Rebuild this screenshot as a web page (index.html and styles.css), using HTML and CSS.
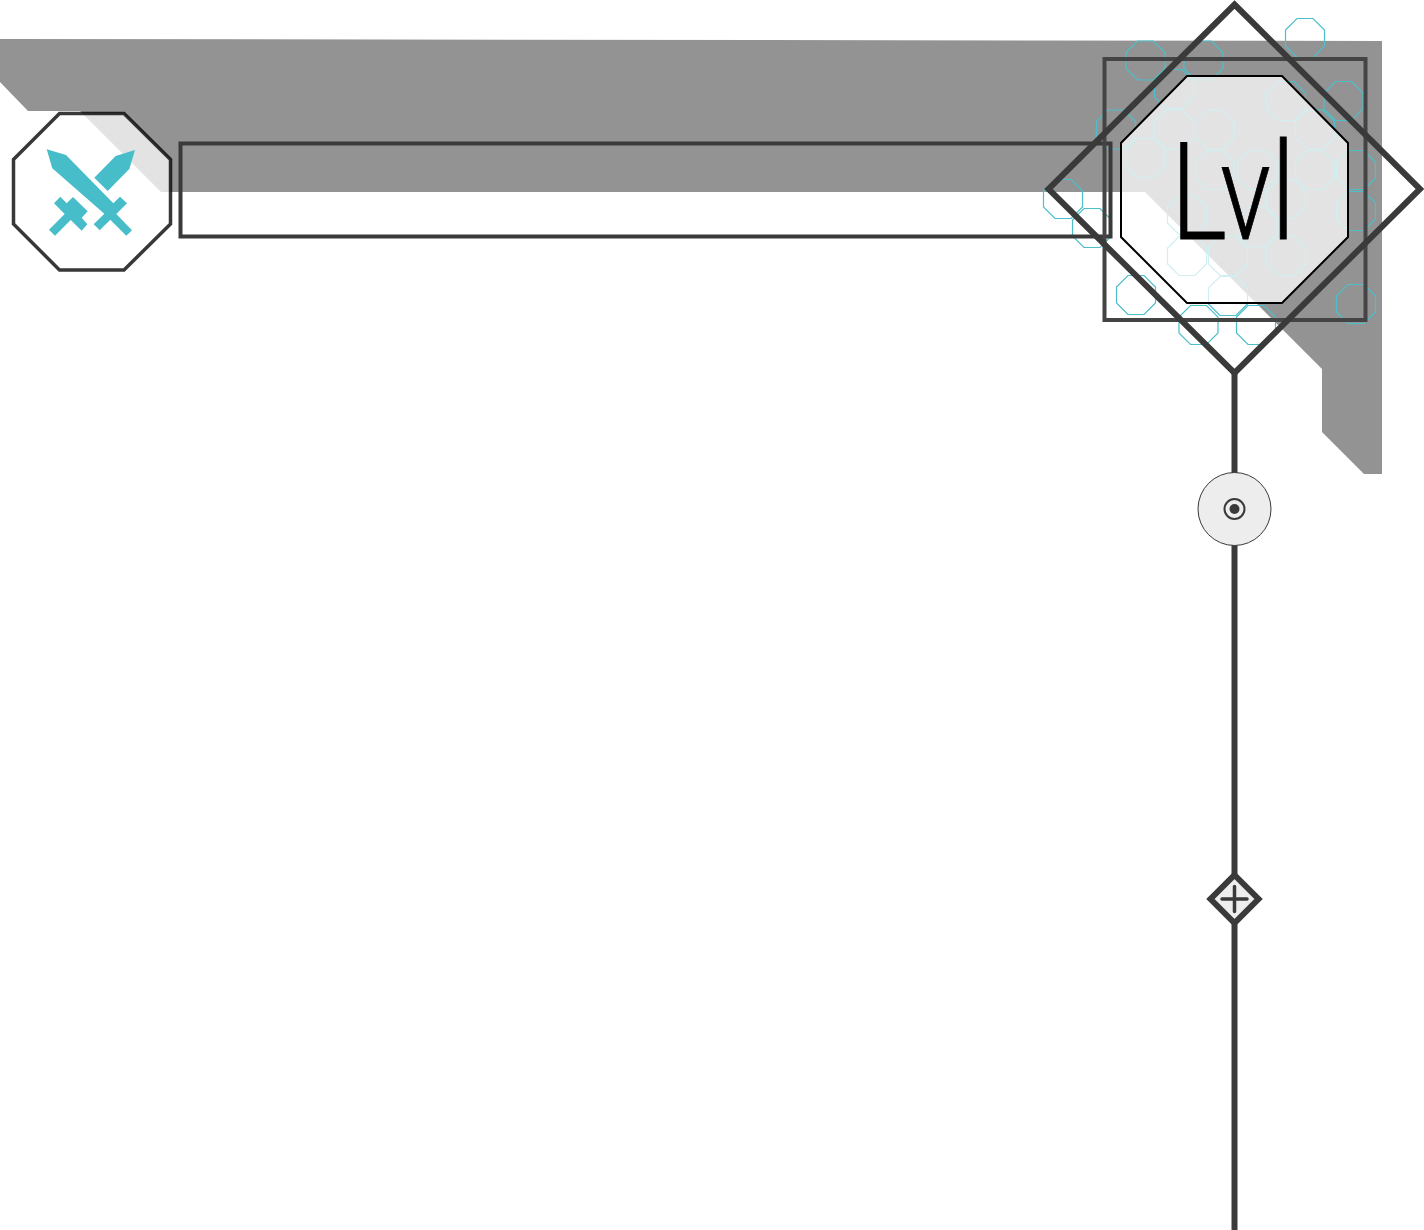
FILE: index.html
```html
<!DOCTYPE html>
<html lang="en">
<head>
  <meta charset="UTF-8">
  <meta name="viewport" content="width=device-width, initial-scale=1.0">
  <title>Level frame</title>
  <link rel="stylesheet" href="styles.css">
</head>
<body>

<svg id="frame" width="1424" height="1230" viewBox="0 0 1424 1230">
  <defs>
    <polygon id="oct" points="-8,-19.5 8,-19.5 19.5,-8 19.5,8 8,19.5 -8,19.5 -19.5,8 -19.5,-8"></polygon>
  </defs>

  <!-- drop shadow band -->
  <polygon class="band" points="0,39 1382,41 1382,474 1364,474 1322,432 1322,369 1145,192 161,192 80,111 28,111 0,82"></polygon>

  <!-- octagon pattern behind the level badge -->
  <g class="pattern">
    <use href="#oct" x="1145.5" y="60.5"></use>
    <use href="#oct" x="1203.5" y="60.5"></use>
    <use href="#oct" x="1305" y="38"></use>
    <use href="#oct" x="1174" y="89"></use>
    <use href="#oct" x="1286" y="101"></use>
    <use href="#oct" x="1343.5" y="101"></use>
    <use href="#oct" x="1116" y="129.5"></use>
    <use href="#oct" x="1174" y="129.5"></use>
    <use href="#oct" x="1215" y="129.5"></use>
    <use href="#oct" x="1315" y="129.5"></use>
    <use href="#oct" x="1145" y="158"></use>
    <use href="#oct" x="1215" y="170"></use>
    <use href="#oct" x="1257" y="170"></use>
    <use href="#oct" x="1315" y="170"></use>
    <use href="#oct" x="1356" y="170"></use>
    <use href="#oct" x="1063" y="199"></use>
    <use href="#oct" x="1286" y="199"></use>
    <use href="#oct" x="1356" y="211"></use>
    <use href="#oct" x="1187" y="215"></use>
    <use href="#oct" x="1092" y="228"></use>
    <use href="#oct" x="1257" y="227"></use>
    <use href="#oct" x="1187" y="256"></use>
    <use href="#oct" x="1228" y="256"></use>
    <use href="#oct" x="1286" y="256"></use>
    <use href="#oct" x="1136" y="295"></use>
    <use href="#oct" x="1228" y="296"></use>
    <use href="#oct" x="1356" y="304"></use>
    <use href="#oct" x="1198.5" y="325"></use>
    <use href="#oct" x="1256" y="325"></use>
  </g>

  <!-- class icon -->
  <polygon class="icon-plate" points="59.5,113.5 124,113.5 170.5,159.5 170.5,224 124,270 59.5,270 13.5,224 13.5,159.5"></polygon>
  <g class="swords">
    <polygon points="46.7,149.3 66,155 113.3,203.3 120,196.7 127,203.3 116.3,214 132,230.3 126.3,235.7 110.3,219.7 99.7,230.3 93.7,224.3 104.3,213.7 52.3,168.3"></polygon>
    <polygon points="135,150 129.3,169 107.7,191 94.3,177.7 115.7,156"></polygon>
    <polygon points="60.3,196.7 66.7,203.3 73,197 87.7,211.3 81.7,217.7 87.3,224.3 81.7,230.7 70.7,220 55,235.7 49,229.7 64.7,214 54,203.3"></polygon>
  </g>

  <!-- xp bar -->
  <rect class="bar" x="180.5" y="143.5" width="930" height="93"></rect>

  <!-- level badge -->
  <rect class="badge-square" x="1104.5" y="59" width="261" height="261"></rect>
  <polygon class="badge-plate" points="1187,76 1282,76 1348,143 1348,237 1282,303 1187,303 1121,237 1121,143"></polygon>
  <text class="badge-label" x="1171" y="239" textLength="124" lengthAdjust="spacingAndGlyphs">Lvl</text>
  <polygon class="badge-diamond" points="1234.5,4.5 1420,189 1234.5,373 1048.5,189"></polygon>

  <!-- skill line -->
  <line class="track" x1="1234.5" y1="373" x2="1234.5" y2="1230"></line>

  <circle class="node-round" cx="1234.5" cy="509" r="36.5"></circle>
  <circle class="node-ring" cx="1234.5" cy="509" r="10"></circle>
  <circle class="node-dot" cx="1234.5" cy="509" r="5"></circle>

  <polygon class="node-diamond" points="1234.5,875 1258.5,899 1234.5,923 1210.5,899"></polygon>
  <path class="node-plus" d="M1222 899H1247M1234.5 886.5V911.5"></path>
</svg>

</body>
</html>
```

FILE: styles.css
```css
body {
  margin: 0;
  background-color: #fff;
}

#frame {
  display: block;
}

.band {
  fill: #939393;
}

.pattern {
  fill: none;
  stroke: #4dbfca;
  stroke-width: 1.2;
}

.icon-plate {
  fill: rgba(255, 255, 255, 0.74);
  stroke: rgba(0, 0, 0, 0.78);
  stroke-width: 3.5;
}

.swords {
  fill: #46bdc8;
}

.bar {
  fill: none;
  stroke: #3a3a3a;
  stroke-width: 4;
}

.badge-square {
  fill: none;
  stroke: #444;
  stroke-width: 4;
}

.badge-plate {
  fill: rgba(255, 255, 255, 0.74);
  stroke: #000;
  stroke-width: 2;
}

.badge-label {
  font-family: Roboto, "Liberation Sans", sans-serif;
  font-weight: 300;
  font-size: 135px;
  fill: #000;
  stroke: #000;
  stroke-width: 0.8;
}

.badge-diamond {
  fill: none;
  stroke: #3a3a3a;
  stroke-width: 6;
}

.track {
  stroke: #3a3a3a;
  stroke-width: 6;
}

.node-round {
  fill: #ededed;
  stroke: #3a3a3a;
  stroke-width: 1;
}

.node-ring {
  fill: none;
  stroke: #3a3a3a;
  stroke-width: 2;
}

.node-dot {
  fill: #3a3a3a;
}

.node-diamond {
  fill: #eee;
  stroke: #3a3a3a;
  stroke-width: 6;
}

.node-plus {
  fill: none;
  stroke: #3a3a3a;
  stroke-width: 3.5;
  stroke-linecap: round;
}
```
